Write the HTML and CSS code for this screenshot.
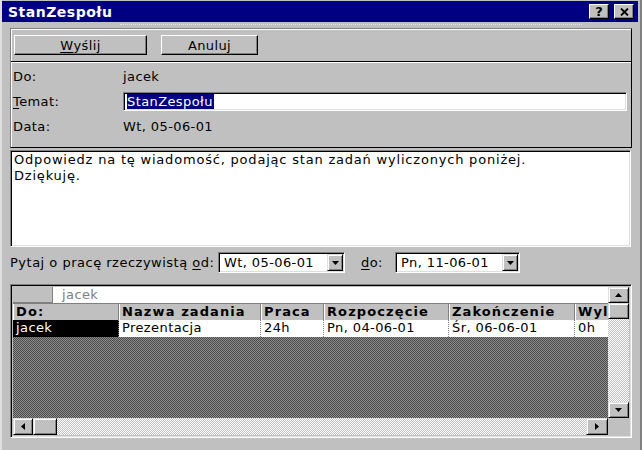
FILE: index.html
```html
<!DOCTYPE html>
<html lang="pl">
<head>
<meta charset="utf-8">
<title>StanZespołu</title>
<link rel="stylesheet" href="styles.css">
</head>
<body>
<div class="win">
  <div class="titlebar">
    <span class="title">StanZespołu</span>
    <div class="tbtns">
      <span class="tbtn q">?</span>
      <span class="tbtn"><svg width="9" height="8" viewBox="0 0 9 8"><path d="M1 0.5 L8 7.5 M8 0.5 L1 7.5" stroke="#000" stroke-width="1.8" fill="none"/></svg></span>
    </div>
  </div>
  <div class="dots"></div>
  <div class="content">
    <div class="panel">
      <div class="toolbar">
        <div class="btn send"><u>W</u>yślij</div>
        <div class="btn cancel">Anuluj</div>
      </div>
      <div class="fields">
        <div class="frow"><span class="lbl">Do:</span><span class="val">jacek</span></div>
        <div class="frow"><span class="lbl"><u>T</u>emat:</span><div class="input"><span class="sel">StanZespołu</span></div></div>
        <div class="frow"><span class="lbl">Data:</span><span class="val">Wt, 05-06-01</span></div>
      </div>
    </div>
    <div class="msg">Odpowiedz na tę wiadomość, podając stan zadań wyliczonych poniżej.<br>Dziękuję.</div>
    <div class="askrow">
      <span class="asklbl">Pytaj o pracę rzeczywistą <u>o</u>d:</span>
      <div class="combo c1"><span class="ctext">Wt, 05-06-01</span><span class="dd"><svg width="7" height="4" viewBox="0 0 7 4"><polygon points="0,0 7,0 3.5,4" fill="#000"/></svg></span></div>
      <span class="dolbl"><u>d</u>o:</span>
      <div class="combo c2"><span class="ctext">Pn, 11-06-01</span><span class="dd"><svg width="7" height="4" viewBox="0 0 7 4"><polygon points="0,0 7,0 3.5,4" fill="#000"/></svg></span></div>
    </div>
    <div class="grid">
      <div class="main">
        <div class="toprow"><span class="corner"></span><span class="editval">jacek</span></div>
        <div class="hrow">
          <span class="cell w1">Do:</span>
          <span class="cell w2">Nazwa zadania</span>
          <span class="cell w3">Praca</span>
          <span class="cell w4">Rozpoczęcie</span>
          <span class="cell w5">Zakończenie</span>
          <span class="cell w6">Wyl</span>
        </div>
        <div class="drow">
          <span class="cell w1 selcell">jacek</span>
          <span class="cell w2">Prezentacja</span>
          <span class="cell w3">24h</span>
          <span class="cell w4">Pn, 04-06-01</span>
          <span class="cell w5">Śr, 06-06-01</span>
          <span class="cell w6">0h</span>
        </div>
        <div class="hatch"></div>
      </div>
      <div class="vscroll">
        <span class="sbtn"><svg width="7" height="4" viewBox="0 0 7 4"><polygon points="0,4 7,4 3.5,0" fill="#000"/></svg></span>
        <span class="thumb"></span>
        <span class="track"></span>
        <span class="sbtn"><svg width="7" height="4" viewBox="0 0 7 4"><polygon points="0,0 7,0 3.5,4" fill="#000"/></svg></span>
      </div>
      <div class="hscroll">
        <span class="sbtn hl"><svg width="4" height="7" viewBox="0 0 4 7"><polygon points="4,0 4,7 0,3.5" fill="#000"/></svg></span>
        <span class="thumb hth"></span>
        <span class="track"></span>
        <span class="sbtn hr"><svg width="4" height="7" viewBox="0 0 4 7"><polygon points="0,0 0,7 4,3.5" fill="#000"/></svg></span>
      </div>
      <div class="sizer"></div>
    </div>
  </div>
</div>
</body>
</html>
```

FILE: styles.css
```css
* { box-sizing: border-box; }
html, body { margin: 0; padding: 0; }
body {
  width: 642px;
  height: 450px;
  overflow: hidden;
  background: #c0c0c0;
  font-family: "DejaVu Sans", "Liberation Sans", sans-serif;
  font-size: 13px;
  letter-spacing: 0.4px;
  color: #000;
}
u { text-decoration: underline; text-underline-offset: 2px; }

.win {
  height: 450px;
  padding-top: 1px;
  box-shadow: inset 2px 0 0 #dfdfdf, inset -2px 0 0 #808080;
}

.titlebar {
  height: 21px;
  margin: 0 4px 0 2px;
  background: #000080;
  display: flex;
  align-items: center;
  padding: 0 4px 0 6px;
}
.title {
  color: #fff;
  font-weight: bold;
  font-size: 14px;
  letter-spacing: 0.5px;
}
.tbtns {
  margin-left: auto;
  display: flex;
  gap: 5px;
}
.tbtn {
  width: 20px;
  height: 15px;
  background: #c0c0c0;
  border: 1px solid;
  border-color: #fff #000 #000 #fff;
  box-shadow: inset -1px -1px #808080;
  display: flex;
  align-items: center;
  justify-content: center;
}
.q {
  font-weight: bold;
  font-size: 13px;
  letter-spacing: 0;
  line-height: 1;
}

.dots {
  margin: 2px 60px 0 120px;
  border-top: 1px dotted #e4e4e4;
}

.content {
  padding: 3px 10px 0 10px;
}

.panel {
  height: 120px;
  border: 1px solid;
  border-color: #808080 #000 #000 #808080;
  box-shadow: inset 1px 1px #fff;
  display: flex;
  flex-direction: column;
}
.toolbar {
  height: 33px;
  border-bottom: 1px solid #000;
  display: flex;
  align-items: center;
  gap: 14px;
  padding-left: 3px;
}
.btn {
  height: 20px;
  background: #c0c0c0;
  border: 1px solid;
  border-color: #fff #000 #000 #fff;
  box-shadow: inset -1px -1px #808080;
  display: flex;
  align-items: center;
  justify-content: center;
}
.send { width: 133px; }
.cancel { width: 97px; }

.fields {
  flex: 1;
  border-top: 1px solid #fff;
  padding: 1px 3px 0 2px;
}
.frow {
  height: 25px;
  display: flex;
  align-items: center;
}
.lbl { width: 110px; }
.input {
  width: 504px;
  height: 19px;
  background: #fff;
  border: 1px solid;
  border-color: #808080 #fff #fff #808080;
  box-shadow: inset 1px 1px #000, inset -1px -1px #dfdfdf;
  display: flex;
  align-items: center;
  padding-left: 3px;
}
.sel {
  background: #000080;
  color: #fff;
  line-height: 15px;
  padding-right: 1px;
}

.msg {
  margin-top: 2px;
  height: 97px;
  width: 621px;
  background: #fff;
  border: 1px solid;
  border-color: #808080 #fff #fff #808080;
  box-shadow: inset 1px 1px #000, inset -1px -1px #dfdfdf;
  padding: 1px 3px 0 3px;
  line-height: 16px;
  letter-spacing: 0.8px;
}

.askrow {
  margin-top: 5px;
  height: 21px;
  display: flex;
  align-items: center;
}
.asklbl { width: 208px; white-space: nowrap; letter-spacing: 0.5px; }
.dolbl { margin-left: 16px; width: 34px; }
.combo {
  height: 21px;
  background: #fff;
  border: 1px solid;
  border-color: #808080 #fff #fff #808080;
  box-shadow: inset 1px 1px #000, inset -1px -1px #dfdfdf;
  display: flex;
  align-items: center;
  padding: 1px;
}
.c1 { width: 127px; }
.c2 { width: 125px; }
.ctext { padding-left: 4px; flex: 1; white-space: nowrap; }
.dd {
  width: 16px;
  height: 17px;
  background: #c0c0c0;
  border: 1px solid;
  border-color: #dfdfdf #000 #000 #dfdfdf;
  box-shadow: inset 1px 1px #fff, inset -1px -1px #808080;
  display: flex;
  align-items: center;
  justify-content: center;
}

.grid {
  margin-top: 11px;
  height: 154px;
  border: 1px solid;
  border-color: #808080 #fff #fff #808080;
  box-shadow: inset 1px 1px #000, inset -1px -1px #dfdfdf;
  padding: 2px;
  display: grid;
  grid-template-columns: 1fr 21px;
  grid-template-rows: 1fr 17px;
}
.main {
  display: flex;
  flex-direction: column;
  overflow: hidden;
  min-width: 0;
}
.toprow {
  height: 16px;
  display: flex;
  background: #fff;
  flex: none;
}
.corner {
  width: 40px;
  background: #c0c0c0;
  border-right: 1px solid #808080;
  border-bottom: 1px solid #808080;
}
.editval {
  padding-left: 9px;
  color: #808080;
  line-height: 16px;
}
.hrow, .drow {
  height: 17px;
  display: flex;
  flex: none;
  white-space: nowrap;
}
.hrow {
  background: #c0c0c0;
  font-weight: bold;
  letter-spacing: 1.1px;
  border-top: 1px solid #808080;
}
.cell {
  flex: none;
  padding-left: 3px;
  line-height: 16px;
  overflow: hidden;
}
.hrow .cell {
  border-right: 1px solid #808080;
  box-shadow: inset 1px 0 #fff;
}
.drow { background: #fff; }
.drow .cell { border-right: 1px dotted #808080; }
.selcell { background: #000; color: #fff; }
.w1 { width: 106px; }
.w2 { width: 142px; }
.w3 { width: 63px; }
.w4 { width: 125px; }
.w5 { width: 126px; }
.w6 { width: 60px; }
.hatch {
  flex: 1;
  background: repeating-conic-gradient(#8e8e8e 0 25%, #4a4a4a 0 50%) 0 0 / 2px 2px;
}

.vscroll {
  display: flex;
  flex-direction: column;
  background: repeating-conic-gradient(#fff 0 25%, #c0c0c0 0 50%) 0 0 / 2px 2px;
}
.hscroll {
  display: flex;
  background: repeating-conic-gradient(#fff 0 25%, #c0c0c0 0 50%) 0 0 / 2px 2px;
}
.track { flex: 1; }
.sbtn, .thumb {
  flex: none;
  background: #c0c0c0;
  border: 1px solid;
  border-color: #dfdfdf #000 #000 #dfdfdf;
  box-shadow: inset 1px 1px #fff, inset -1px -1px #808080;
  display: flex;
  align-items: center;
  justify-content: center;
}
.vscroll .sbtn, .vscroll .thumb { height: 16px; }
.hscroll .sbtn { height: 17px; }
.hl { width: 20px; }
.hr { width: 22px; }
.hth { width: 24px; height: 17px; }
.sizer { background: #c0c0c0; }
```
